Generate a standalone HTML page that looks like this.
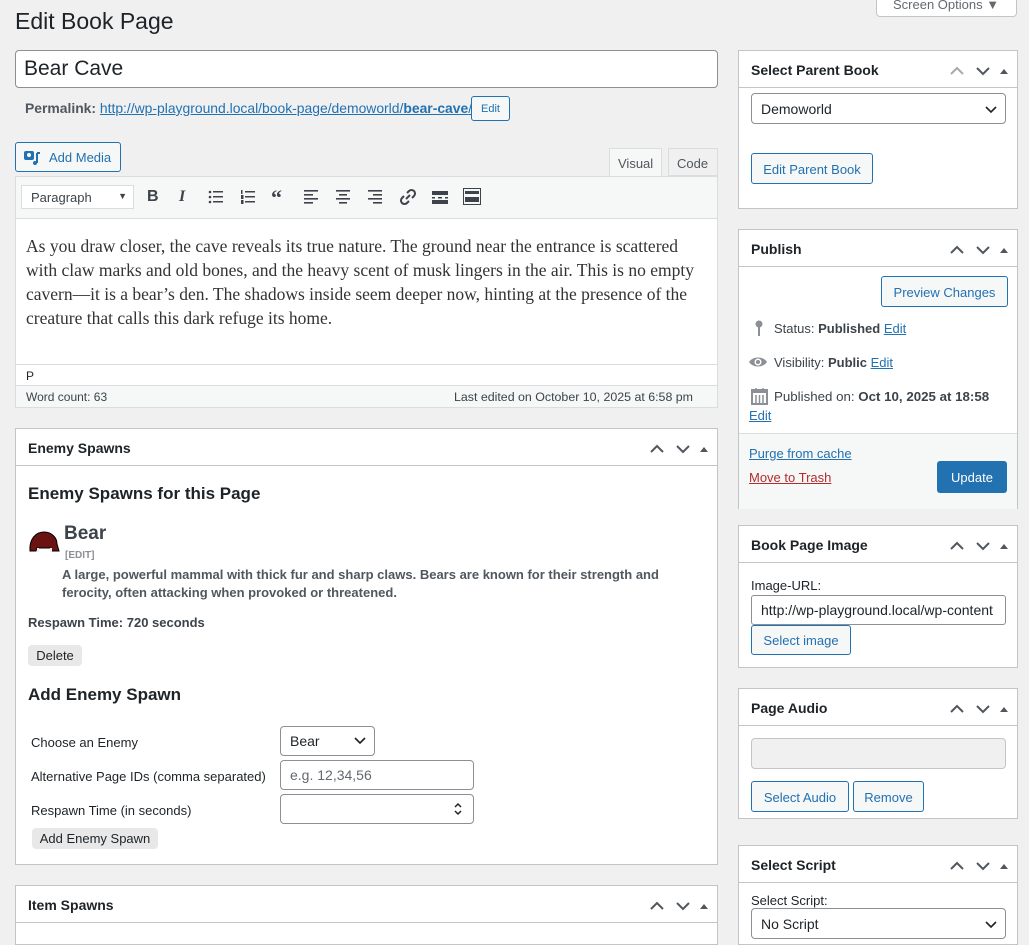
<!DOCTYPE html>
<html><head><meta charset="utf-8">
<style>
*{box-sizing:border-box;margin:0;padding:0}
body{width:1029px;height:925px;overflow:hidden;background:#f0f0f1;font-family:"Liberation Sans",Arial,sans-serif;font-size:13px;color:#1d2327;position:relative}
.a{position:absolute}
.box{position:absolute;background:#fff;border:1px solid #c3c4c7}
.hd{position:absolute;left:0;right:0;top:0;height:37px;border-bottom:1px solid #c3c4c7;font-weight:bold;font-size:14px;padding:11px 12px}
.ctl{position:absolute;right:6px;top:11px}
.btn{position:absolute;border:1px solid #2271b1;color:#2271b1;border-radius:3px;background:#f6f7f7;font-size:13px;text-align:center}
.inp{position:absolute;border:1px solid #8c8f94;border-radius:4px;background:#fff;font-size:14px;padding:0 9px}
a{color:#2271b1;text-decoration:underline}
.gb{position:absolute;background:#e8e8e8;border-radius:4px;font-size:13px;text-align:center;color:#1d2327}
.tb{position:absolute;top:188px;font-size:16px;color:#3c434a;font-weight:bold}
.dd{position:absolute;right:8px;top:10px}
</style></head><body>
<svg width="0" height="0" style="position:absolute">
 <defs>
  <g id="ctl"><path d="M2 12l6-6 6 6" stroke="#50575e" stroke-width="2" fill="none"/><path d="M28 6l6 6 6-6" stroke="#50575e" stroke-width="2" fill="none"/><path d="M51 12l4-5 4 5z" fill="#50575e"/></g>
  <g id="ctl2"><path d="M2 12l6-6 6 6" stroke="#a7aaad" stroke-width="2" fill="none"/><path d="M28 6l6 6 6-6" stroke="#50575e" stroke-width="2" fill="none"/><path d="M51 12l4-5 4 5z" fill="#50575e"/></g>
  <g id="chev"><path d="M1 1l5 5 5-5" stroke="#1d2327" stroke-width="1.6" fill="none"/></g>
 </defs>
</svg>
<div class="a" style="left:15px;top:8px;font-size:23px;color:#1d2327">Edit Book Page</div>
<div class="a" style="left:876px;top:-8px;width:141px;height:25px;background:#fff;border:1px solid #c3c4c7;border-radius:0 0 4px 4px;color:#646970;font-size:13px;padding:4px 0 0 16px">Screen Options ▼</div>

<div class="inp" style="left:15px;top:50px;width:703px;height:38px;font-size:21px;padding:6px 8px;color:#1d2327">Bear Cave</div>
<div class="a" style="left:25px;top:100px;color:#50575e;font-size:13.9px"><b>Permalink:</b> <a>http://wp-playground.local/book-page/demoworld/<b>bear-cave</b>/</a></div>
<div class="btn" style="left:471px;top:96px;width:39px;height:25px;font-size:11px;padding-top:6px">Edit</div>

<div class="btn" style="left:15px;top:142px;width:106px;height:30px;padding:7px 0 0 33px;text-align:left">Add Media</div>
<svg class="a" style="left:24px;top:149px" width="18" height="17" viewBox="0 0 18 17"><rect x="0" y="2" width="10" height="9" rx="2" fill="#2271b1"/><circle cx="5" cy="6" r="2" fill="#fff"/><path d="M13 4v10M13 4h3" stroke="#2271b1" stroke-width="2"/><circle cx="11" cy="14" r="2" fill="#2271b1"/></svg>
<div class="a" style="left:609px;top:148px;width:53px;height:29px;background:#f6f7f7;border:1px solid #dcdcde;border-bottom:none;color:#50575e;padding:7px 0 0 8px">Visual</div>
<div class="a" style="left:668px;top:148px;width:50px;height:28px;background:#f0f0f1;border:1px solid #dcdcde;color:#50575e;padding:7px 0 0 8px">Code</div>

<div class="a" style="left:15px;top:176px;width:703px;height:232px;border:1px solid #dcdcde;background:#fff">
 <div class="a" style="left:0;top:0;width:701px;height:42px;background:#f6f7f7;border-bottom:1px solid #dcdcde"></div>
 <div class="a" style="left:5px;top:8px;width:113px;height:24px;background:#fff;border:1px solid #dcdcde;padding:4px 0 0 9px;color:#3c434a">Paragraph<span style="position:absolute;right:6px;top:5px;font-size:9px">▼</span></div>
 <div class="a" style="left:0;top:42px;padding:15px 10px;width:701px;font-family:'Liberation Serif',Georgia,serif;font-size:17.5px;line-height:24px;color:#333">As you draw closer, the cave reveals its true nature. The ground near the entrance is scattered with claw marks and old bones, and the heavy scent of musk lingers in the air. This is no empty cavern—it is a bear’s den. The shadows inside seem deeper now, hinting at the presence of the creature that calls this dark refuge its home.</div>
 <div class="a" style="left:0;top:187px;width:701px;height:22px;border-top:1px solid #dcdcde;padding:4px 10px;font-size:12px">P</div>
 <div class="a" style="left:0;top:208px;width:701px;height:22px;border-top:1px solid #dcdcde;background:#f6f7f7;padding:4px 10px;font-size:12px;color:#3c434a">Word count: 63<span style="position:absolute;right:24px;font-size:12.4px">Last edited on October 10, 2025 at 6:58 pm</span></div>
</div>
<span class="tb" style="left:147px;font-family:'Liberation Sans';font-weight:bold">B</span>
<span class="tb" style="left:179px;font-family:'Liberation Serif';font-style:italic">I</span>
<svg class="a" style="left:208px;top:190px" width="16" height="14"><g fill="#3c434a"><circle cx="2" cy="2" r="1.3"/><circle cx="2" cy="7" r="1.3"/><circle cx="2" cy="12" r="1.3"/><rect x="5" y="1" width="10" height="1.5"/><rect x="5" y="6" width="10" height="1.5"/><rect x="5" y="11" width="10" height="1.5"/></g></svg>
<svg class="a" style="left:240px;top:190px" width="16" height="14"><g fill="#3c434a"><rect x="1" y="0" width="1.5" height="4"/><rect x="1" y="5" width="2.5" height="4"/><rect x="1" y="10" width="2.5" height="4"/><rect x="5" y="1" width="10" height="1.5"/><rect x="5" y="6" width="10" height="1.5"/><rect x="5" y="11" width="10" height="1.5"/></g></svg>
<span class="tb" style="left:271px;font-size:22px;top:185px;font-family:'Liberation Serif'">“</span>
<svg class="a" style="left:304px;top:190px" width="16" height="14"><g fill="#3c434a"><rect x="0" y="0" width="14" height="1.6"/><rect x="0" y="4" width="9" height="1.6"/><rect x="0" y="8" width="14" height="1.6"/><rect x="0" y="12" width="9" height="1.6"/></g></svg>
<svg class="a" style="left:336px;top:190px" width="16" height="14"><g fill="#3c434a"><rect x="0" y="0" width="14" height="1.6"/><rect x="3" y="4" width="8" height="1.6"/><rect x="0" y="8" width="14" height="1.6"/><rect x="3" y="12" width="8" height="1.6"/></g></svg>
<svg class="a" style="left:368px;top:190px" width="16" height="14"><g fill="#3c434a"><rect x="0" y="0" width="14" height="1.6"/><rect x="5" y="4" width="9" height="1.6"/><rect x="0" y="8" width="14" height="1.6"/><rect x="5" y="12" width="9" height="1.6"/></g></svg>
<svg class="a" style="left:399px;top:188px" width="18" height="18" viewBox="0 0 18 18"><path d="M7 11l4-4M8 5l2-2a3 3 0 015 5l-2 2M10 13l-2 2a3 3 0 01-5-5l2-2" stroke="#3c434a" stroke-width="2" fill="none"/></svg>
<svg class="a" style="left:432px;top:189px" width="16" height="16"><rect x="0" y="2" width="16" height="4" fill="#3c434a"/><rect x="0" y="8" width="3" height="1.5" fill="#3c434a"/><rect x="6" y="8" width="4" height="1.5" fill="#3c434a"/><rect x="13" y="8" width="3" height="1.5" fill="#3c434a"/><rect x="0" y="11" width="16" height="4" fill="#3c434a"/></svg>
<svg class="a" style="left:463px;top:188px" width="18" height="17"><rect x="0.5" y="0.5" width="17" height="16" fill="none" stroke="#3c434a"/><rect x="2" y="3" width="14" height="3" fill="#3c434a"/><rect x="2" y="9" width="14" height="5" fill="#3c434a"/></svg>

<div class="box" style="left:15px;top:428px;width:703px;height:437px">
 <div class="hd">Enemy Spawns<svg class="ctl" width="62" height="16"><use href="#ctl"/></svg></div>
 <div class="a" style="left:12px;top:55px;font-size:17px;font-weight:bold">Enemy Spawns for this Page</div>
 <svg class="a" style="left:12px;top:100px" width="32" height="26"><path d="M2 22C1 10 8 3 16 3c8 0 13 6 13 12l2 7H24l-1-3H9l-1 3z" fill="#6b1212" stroke="#000"/><rect x="9" y="19" width="2" height="4" fill="#eee"/><rect x="22" y="19" width="2" height="4" fill="#eee"/></svg>
 <div class="a" style="left:48px;top:94px;font-size:19px;font-weight:bold;color:#3c434a">Bear</div>
 <div class="a" style="left:49px;top:121px;font-size:10px;font-weight:bold;color:#8c8f94">[EDIT]</div>
 <div class="a" style="left:46px;top:137px;font-weight:bold;color:#50575e;line-height:18px;width:650px">A large, powerful mammal with thick fur and sharp claws. Bears are known for their strength and ferocity, often attacking when provoked or threatened.</div>
 <div class="a" style="left:12px;top:186px;font-weight:bold;color:#3c434a">Respawn Time: 720 seconds</div>
 <div class="gb" style="left:12px;top:216px;width:54px;height:21px;padding-top:3px">Delete</div>
 <div class="a" style="left:12px;top:256px;font-size:17px;font-weight:bold">Add Enemy Spawn</div>
 <div class="a" style="left:15px;top:306px">Choose an Enemy</div>
 <div class="a" style="left:15px;top:340px">Alternative Page IDs (comma separated)</div>
 <div class="a" style="left:15px;top:374px">Respawn Time (in seconds)</div>
 <div class="inp" style="left:264px;top:297px;width:95px;height:30px;padding-top:6px">Bear<svg class="dd" width="12" height="8"><use href="#chev"/></svg></div>
 <div class="inp" style="left:264px;top:331px;width:194px;height:30px;padding-top:6px;color:#646970">e.g. 12,34,56</div>
 <div class="inp" style="left:264px;top:365px;width:194px;height:30px"><svg class="a" style="right:10px;top:7px" width="10" height="14"><path d="M2 5l3-3 3 3M2 9l3 3 3-3" stroke="#1d2327" stroke-width="1.5" fill="none"/></svg></div>
 <div class="gb" style="left:16px;top:399px;width:126px;height:21px;padding-top:3px">Add Enemy Spawn</div>
</div>

<div class="box" style="left:15px;top:885px;width:703px;height:60px">
 <div class="hd">Item Spawns<svg class="ctl" width="62" height="16"><use href="#ctl"/></svg></div>
</div>

<div class="box" style="left:738px;top:50px;width:280px;height:159px">
 <div class="hd">Select Parent Book<svg class="ctl" width="62" height="16"><use href="#ctl2"/></svg></div>
 <div class="inp" style="left:12px;top:42px;width:255px;height:31px;padding-top:7px">Demoworld<svg class="dd" style="top:12px" width="12" height="8"><use href="#chev"/></svg></div>
 <div class="btn" style="left:12px;top:102px;width:122px;height:31px;padding-top:8px">Edit Parent Book</div>
</div>

<div class="box" style="left:738px;top:229px;width:280px;height:280px">
 <div class="hd">Publish<svg class="ctl" width="62" height="16"><use href="#ctl"/></svg></div>
 <div class="btn" style="left:142px;top:46px;width:127px;height:31px;padding-top:8px">Preview Changes</div>
 <svg class="a" style="left:15px;top:90px" width="10" height="18"><circle cx="5" cy="4" r="3.5" fill="#8c8f94"/><rect x="4" y="6" width="2" height="10" fill="#8c8f94"/></svg>
 <div class="a" style="left:35px;top:91px;color:#3c434a">Status: <b>Published</b> <a>Edit</a></div>
 <svg class="a" style="left:9px;top:125px" width="20" height="14"><path d="M1 7C5 1 15 1 19 7 15 13 5 13 1 7z" fill="#8c8f94"/><circle cx="10" cy="7" r="3.5" fill="#fff"/><circle cx="10" cy="7" r="2" fill="#8c8f94"/></svg>
 <div class="a" style="left:35px;top:125px;color:#3c434a">Visibility: <b>Public</b> <a>Edit</a></div>
 <svg class="a" style="left:12px;top:157px" width="17" height="18"><rect x="1" y="3" width="15" height="14" fill="none" stroke="#8c8f94" stroke-width="2"/><rect x="1" y="3" width="15" height="3" fill="#8c8f94"/><path d="M5 1v4M12 1v4M5 8v8M8.5 8v8M12 8v8" stroke="#8c8f94" stroke-width="1.5"/></svg>
 <div class="a" style="left:35px;top:159px;color:#3c434a;font-size:13.3px">Published on: <b>Oct 10, 2025 at 18:58</b></div>
 <div class="a" style="left:10px;top:178px"><a>Edit</a></div>
 <div class="a" style="left:0;top:203px;width:278px;height:76px;background:#f6f7f7;border-top:1px solid #dcdcde"></div>
 <div class="a" style="left:10px;top:216px"><a>Purge from cache</a></div>
 <div class="a" style="left:10px;top:240px"><a style="color:#b32d2e">Move to Trash</a></div>
 <div class="a" style="left:198px;top:231px;width:70px;height:32px;background:#2271b1;border-radius:3px;color:#fff;font-size:13px;text-align:center;padding-top:9px">Update</div>
</div>

<div class="box" style="left:738px;top:525px;width:280px;height:143px">
 <div class="hd">Book Page Image<svg class="ctl" width="62" height="16"><use href="#ctl"/></svg></div>
 <div class="a" style="left:12px;top:52px;color:#1d2327">Image-URL:</div>
 <div class="inp" style="left:12px;top:69px;width:255px;height:30px;padding-top:6px;overflow:hidden;white-space:nowrap;border-radius:3px">http://wp-playground.local/wp-content</div>
 <div class="btn" style="left:12px;top:99px;width:100px;height:30px;padding-top:7px">Select image</div>
</div>

<div class="box" style="left:738px;top:688px;width:280px;height:131px">
 <div class="hd">Page Audio<svg class="ctl" width="62" height="16"><use href="#ctl"/></svg></div>
 <div class="inp" style="left:12px;top:49px;width:255px;height:31px;background:#f0f0f1;border-color:#c3c4c7"></div>
 <div class="btn" style="left:12px;top:92px;width:98px;height:31px;padding-top:8px">Select Audio</div>
 <div class="btn" style="left:114px;top:92px;width:71px;height:31px;padding-top:8px">Remove</div>
</div>

<div class="box" style="left:738px;top:845px;width:280px;height:100px">
 <div class="hd">Select Script<svg class="ctl" width="62" height="16"><use href="#ctl"/></svg></div>
 <div class="a" style="left:12px;top:47px">Select Script:</div>
 <div class="inp" style="left:12px;top:62px;width:255px;height:31px;padding-top:7px">No Script<svg class="dd" style="top:12px" width="12" height="8"><use href="#chev"/></svg></div>
</div>
</body></html>
